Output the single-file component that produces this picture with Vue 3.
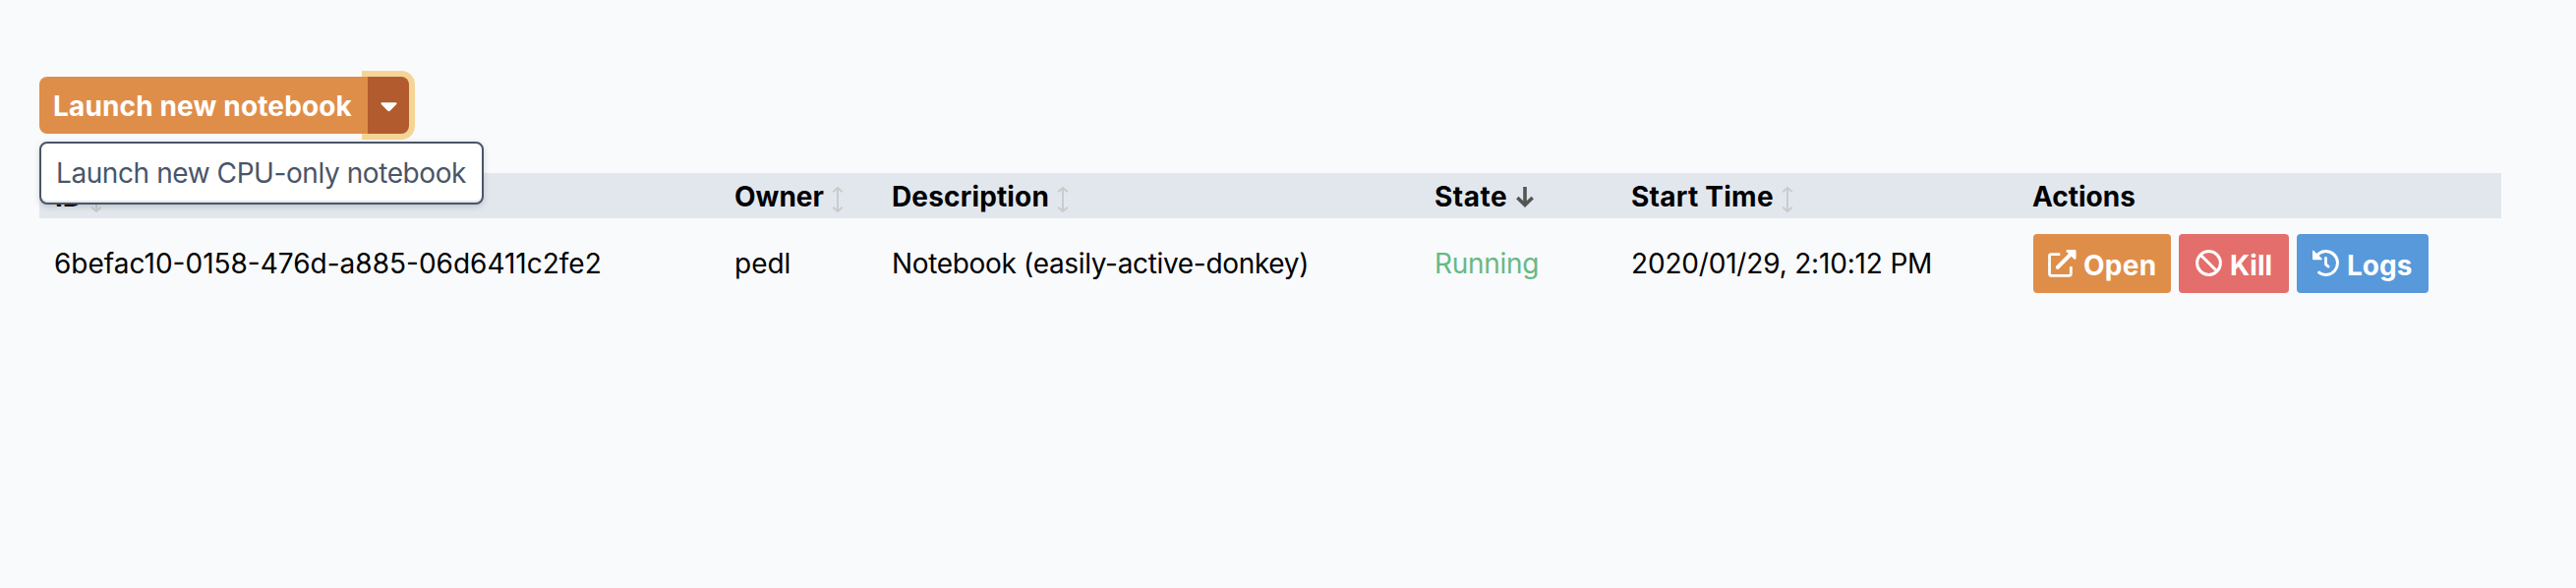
<script setup>
const columns = [
  { label: 'ID', cls: 'id', sort: 'both' },
  { label: 'Owner', cls: 'owner', sort: 'both' },
  { label: 'Description', cls: 'desc', sort: 'both' },
  { label: 'State', cls: 'state', sort: 'down' },
  { label: 'Start Time', cls: 'start', sort: 'both' },
  { label: 'Actions', cls: 'acts', sort: '' },
]
</script>

<template>
  <main class="page">
    <div class="launcher">
      <button class="launch">Launch new notebook</button>
      <button class="toggle" aria-label="More launch options">
        <svg width="17" height="10" viewBox="0 0 18 10"><path d="M1.500 0h15c1 0 1.300 1 .7 1.700l-7 7.200c-.7.7-1.700.7-2.400 0l-7-7.200C.2 1 .5 0 1.500 0z" fill="#fff" /></svg>
      </button>
      <div class="menu">Launch new CPU-only notebook</div>
    </div>

    <div class="table">
      <div class="row head">
        <div v-for="c in columns" :key="c.label" :class="['cell', c.cls]">
          <span>{{ c.label }}</span>
          <svg v-if="c.sort === 'both'" class="both" width="12" height="28" viewBox="0 0 12 28">
            <path d="M6 2v24M1.200 6.300L6 2l4.800 4.300M1.200 21.700L6 26l4.800-4.300" fill="none" stroke="#cbcbcb" stroke-width="2" />
          </svg>
          <svg v-if="c.sort === 'down'" class="down" width="18" height="22" viewBox="0 0 18 22">
            <path d="M9 0v19M1.300 11l7.700 7.500 7.700-7.500" fill="none" stroke="#555" stroke-width="3.600" />
          </svg>
        </div>
      </div>
      <div class="row body">
        <div class="cell id">6befac10-0158-476d-a885-06d6411c2fe2</div>
        <div class="cell owner">pedl</div>
        <div class="cell desc">Notebook (easily-active-donkey)</div>
        <div class="cell state running">Running</div>
        <div class="cell start">2020/01/29, 2:10:12 PM</div>
        <div class="cell acts buttons">
          <button class="btn open">
            <svg width="29" height="28" viewBox="0 0 29 28">
              <path d="M12.300 4.700H3.200Q1.500 4.700 1.500 6.400v18.200q0 1.700 1.700 1.700h18.400q1.700 0 1.700-1.700V17" fill="none" stroke="#fff" stroke-width="2.800" />
              <path d="M9.800 17.800L24 3.600" stroke="#fff" stroke-width="4" stroke-linecap="round" />
              <path d="M19 0h8.300q1.200 0 1.200 1.200V9l-1.500 1L18.300 1.500z" fill="#fff" />
            </svg>
            <span>Open</span>
          </button>
          <button class="btn kill">
            <svg width="27" height="28" viewBox="0 0 27 28">
              <path d="M5.200 5.200l16.600 16.600" stroke="#fff" stroke-width="3" />
              <circle cx="13.500" cy="13.500" r="11.900" fill="none" stroke="#fff" stroke-width="3" />
            </svg>
            <span>Kill</span>
          </button>
          <button class="btn logs">
            <svg width="27" height="28" viewBox="0 0 27 28">
              <path d="M5 5.200A11.900 11.900 0 1 1 6.700 23.200" fill="none" stroke="#fff" stroke-width="3" stroke-linecap="round" />
              <path d="M13.500 8.300v6.600l2.600 2.200" fill="none" stroke="#fff" stroke-width="2.800" stroke-linecap="round" />
              <path d="M0 1.200Q.3.200 1.300.9L9.700 9q.5 1.200-.7 1.200H1q-1 0-1-1z" fill="#fff" />
            </svg>
            <span>Logs</span>
          </button>
        </div>
      </div>
    </div>
  </main>
</template>

<style>
body { background: #f9fafc; }
</style>

<style scoped>
.page { box-sizing: border-box; height: 598px; padding: 78px 76px 0 40px; background: #f9fafc; font: 28px/42px Inter, "Liberation Sans", sans-serif; color: #000; }
button { border: 0; margin: 0; font: inherit; font-weight: 700; color: #fff; padding: 0; }
.launcher { position: relative; display: flex; height: 58px; }
.launch { position: relative; z-index: 1; width: 334px; background: #df8e4a; border-radius: 8px 0 0 8px; padding: 2px 0 0 14px; text-align: left; letter-spacing: 0.15px; white-space: nowrap; }
.toggle { width: 42px; background: #b25b2f; border-radius: 0 8px 8px 0; box-shadow: 0 0 0 6px #f5d596; display: grid; place-items: center; }
.toggle svg { margin-top: 3px; }
.menu { position: absolute; z-index: 2; left: 0; top: 66px; box-sizing: border-box; width: 452px; height: 64px; border: 2px solid #4a5568; border-radius: 8px; background: #fff; box-shadow: inset 0 -2px #e2e8ee, 0 2px 6px rgba(0, 0, 0, 0.16); color: #4a5568; padding: 9px 15px; letter-spacing: -0.42px; white-space: nowrap; }
.table { margin-top: 40px; }
.row { display: grid; grid-template-columns: 691px 160px 552px 200px 408px 1fr; }
.cell { padding-left: 16px; white-space: nowrap; }
.head { background: #e2e7ee; height: 46px; line-height: 46px; font-weight: 700; }
.head .cell { display: flex; align-items: center; height: 46px; }
.head span { padding-top: 2px; line-height: 44px; }
.head .desc { letter-spacing: 0.15px; }
.head .state { letter-spacing: 0.5px; }
.head .start { letter-spacing: 0.25px; }
.both { margin: 7px 0 0 8px; }
.down { margin: 3px 0 0 9px; }
.body { height: 92px; align-items: center; }
.body .id { padding-left: 15px; }
.body .desc { letter-spacing: -0.33px; }
.body .start { letter-spacing: -0.18px; }
.running { color: #68b984; letter-spacing: -0.3px; }
.buttons { display: flex; gap: 8px; padding-left: 17px; }
.btn { box-sizing: border-box; height: 60px; border-radius: 4px; display: flex; align-items: center; }
.btn span { padding-top: 4px; line-height: 40px; }
.open { background: #df8e4a; width: 140px; padding-left: 15px; gap: 7px; letter-spacing: 0.3px; }
.kill { background: #e46e6b; width: 112px; padding-left: 17px; gap: 8px; }
.logs { background: #5899db; width: 134px; padding-left: 16px; gap: 8px; }
</style>
